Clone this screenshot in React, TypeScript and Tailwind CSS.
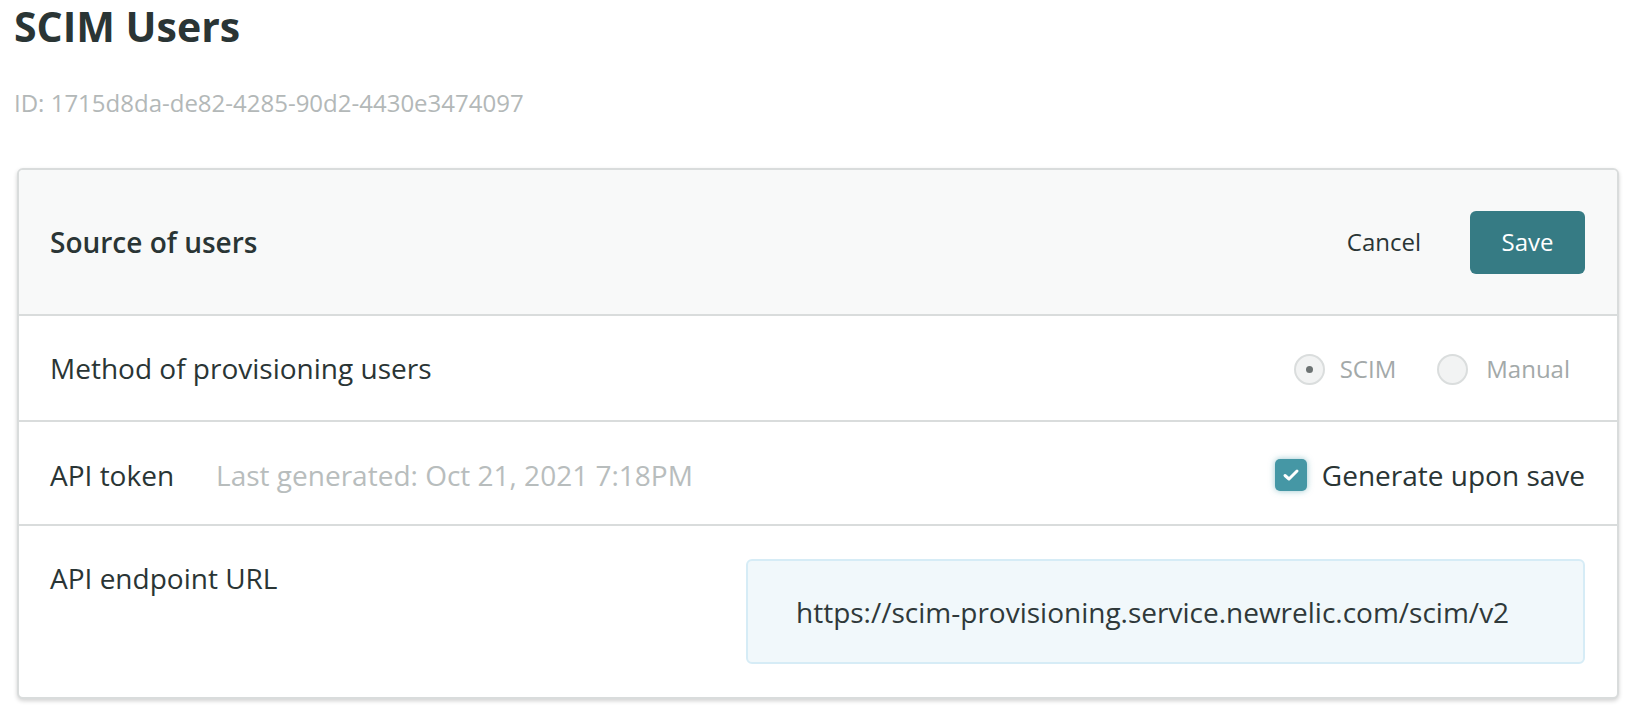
import React from "react";

export default function App() {
  return (
    <div
      className="min-h-screen bg-white pl-[14px] pr-[11px] pt-[1px] text-[#2a3535]"
      style={{ fontFamily: '"Open Sans", "Noto Sans", sans-serif' }}
    >
      <h1 className="text-[41px] leading-[50px] font-bold text-[#2a3535]">SCIM Users</h1>
      <div className="mt-[36px] text-[24px] leading-[32px] text-[#b3b8b8]">
        ID: 1715d8da-de82-4285-90d2-4430e3474097
      </div>

      <div className="mt-[49px] ml-[3px] rounded-[6px] border-2 border-[#d9dcdc] bg-white shadow-[0_2px_4px_rgba(0,0,0,0.18)] overflow-hidden">
        {/* Header */}
        <div className="flex h-[146px] items-center justify-between border-b-2 border-[#d9dcdc] bg-[#f8f9f9] pl-[31px] pr-[32px]">
          <div className="text-[28px] leading-[36px] font-semibold text-[#2a3535]">Source of users</div>
          <div className="flex items-center">
            <button className="text-[24px] leading-[32px] text-[#2a3535]">Cancel</button>
            <button className="ml-[49px] flex h-[63px] w-[115px] items-center justify-center rounded-[6px] bg-[#367b84] text-[24px] font-medium text-white">
              Save
            </button>
          </div>
        </div>

        {/* Row 1 */}
        <div className="flex h-[106px] items-center justify-between border-b-2 border-[#d9dcdc] pl-[31px] pr-[47px]">
          <div className="text-[28px] leading-[36px] text-[#2a3535]">Method of provisioning users</div>
          <div className="flex items-center pt-[2px]">
            <div className="flex h-[31px] w-[31px] items-center justify-center rounded-full border-2 border-[#dadddd] bg-[#f2f3f3]">
              <div className="h-[7px] w-[7px] rounded-full bg-[#6d7373]" />
            </div>
            <span className="ml-[15px] text-[24px] leading-[32px] text-[#a3a9a9]">SCIM</span>
            <div className="ml-[41px] h-[31px] w-[31px] rounded-full border-2 border-[#dadddd] bg-[#f2f3f3]" />
            <span className="ml-[18px] text-[24px] leading-[32px] text-[#a3a9a9]">Manual</span>
          </div>
        </div>

        {/* Row 2 */}
        <div className="flex h-[104px] items-center justify-between border-b-2 border-[#d9dcdc] pl-[31px] pr-[32px]">
          <div className="flex items-center pt-[4px]">
            <span className="text-[28px] leading-[36px] text-[#2a3535]">API token</span>
            <span className="ml-[42px] text-[28px] leading-[36px] text-[#b8bdbd]">
              Last generated: Oct 21, 2021 7:18PM
            </span>
          </div>
          <div className="flex items-center pt-[4px]">
            <div className="flex h-[32px] w-[32px] items-center justify-center rounded-[5px] bg-[#4597a5] shadow-[0_0_6px_rgba(69,151,165,0.55)]">
              <svg width="20" height="16" viewBox="0 0 20 16" fill="none">
                <path d="M4 8.5 L8 12 L16 4" stroke="white" strokeWidth="3" strokeLinecap="round" strokeLinejoin="round" />
              </svg>
            </div>
            <span className="ml-[15px] text-[28px] leading-[36px] text-[#2a3535]">Generate upon save</span>
          </div>
        </div>

        {/* Row 3 */}
        <div className="flex items-start justify-between pl-[31px] pr-[32px] pt-[33px] pb-[33px]">
          <div className="pt-[1px] text-[28px] leading-[36px] text-[#2a3535]">API endpoint URL</div>
          <div className="flex h-[105px] w-[839px] items-center rounded-[6px] border-2 border-[#d6ecf6] bg-[#f1f8fb] pl-[48px]">
            <span className="text-[28px] leading-[36px] text-[#2f393a]">
              https://scim-provisioning.service.newrelic.com/scim/v2
            </span>
          </div>
        </div>
      </div>
    </div>
  );
}
